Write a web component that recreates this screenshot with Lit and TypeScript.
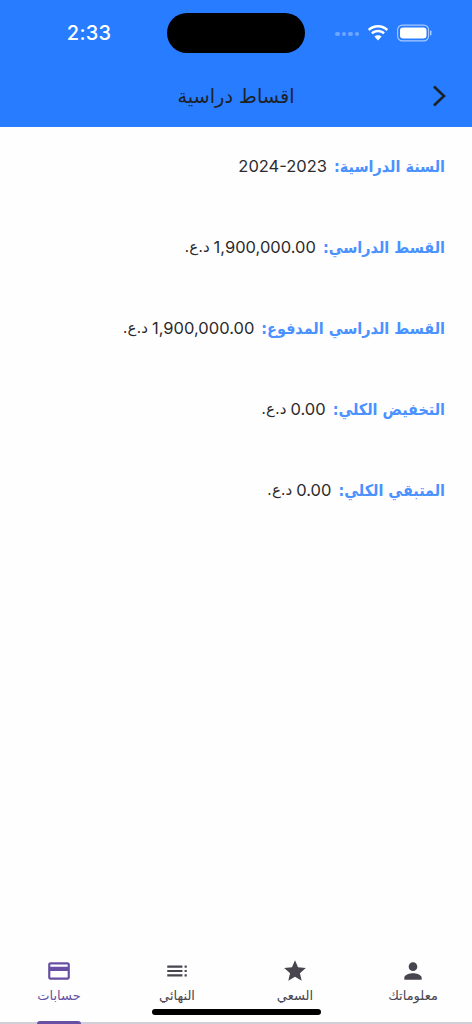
import { LitElement, html, css } from "lit";
import { customElement } from "lit/decorators.js";

const rows = [
  { label: "السنة الدراسية:", value: "2024-2023", unit: "" },
  { label: "القسط الدراسي:", value: "1,900,000.00", unit: "د.ع." },
  { label: "القسط الدراسي المدفوع:", value: "1,900,000.00", unit: "د.ع." },
  { label: "التخفيض الكلي:", value: "0.00", unit: "د.ع." },
  { label: "المتبقي الكلي:", value: "0.00", unit: "د.ع." },
];

@customElement("app-root")
export class AppRoot extends LitElement {
  static styles = css`
    :host { display: flex; flex-direction: column; width: 472px; height: 1024px; background: #fffeff; font-family: "DejaVu Sans", sans-serif; position: relative; overflow: hidden; }
    .head { background: #277cff; height: 127px; display: flex; flex-direction: column; flex: none; }
    .status { height: 53px; margin-top: 13px; display: grid; grid-template-columns: 167px 138px 167px; }
    .time { font: 500 20px "Inter", sans-serif; color: #fff; text-align: center; padding: 8px 0 0 11px; box-sizing: border-box; letter-spacing: 0.2px; }
    .island { background: #000; height: 40px; border-radius: 20px; }
    .sys-row { display: flex; align-items: center; gap: 8px; padding: 11px 0 0 30px; }
    .dots { display: flex; gap: 2px; margin-top: 2px; }
    .dots i { width: 4.500px; height: 4.500px; border-radius: 50%; background: #6fa6ff; }
    .bar { flex: 1; position: relative; display: flex; align-items: center; justify-content: center; margin-top: -1px; }
    .title { font-size: 19.300px; color: #1d2229; direction: rtl; }
    .chev { position: absolute; right: 23px; top: 50%; margin-top: -12px; width: 22px; height: 24px; }
    .list { flex: 1; display: flex; flex-direction: column; direction: rtl; padding: 24px 27px 0 0; gap: 51px; }
    .row { display: flex; align-items: center; gap: 7px; height: 30px; }
    .label { font-family: "DejaVu Sans Condensed", "DejaVu Sans", sans-serif; font-size: 16px; font-weight: 700; color: #4a92ff; white-space: nowrap; }
    .val { font: 400 16.500px "Inter", sans-serif; color: #2b2b2e; direction: ltr; }
    .unit { font-size: 15px; color: #2b2b2e; margin-right: -3px; }
    .tabs { height: 78px; flex: none; display: flex; direction: rtl; border-bottom: 2px solid #d2cfd8; box-sizing: border-box; position: relative; }
    .tab { width: 118px; display: flex; flex-direction: column; align-items: center; position: relative; padding-top: 12px; box-sizing: border-box; color: #48454e; font-size: 13px; }
    .tab svg { width: 26px; height: 26px; fill: currentColor; display: block; }
    .tab span { margin-top: 4px; }
    .tab.on { color: #6750a4; }
    .ind { position: absolute; left: 37px; width: 44px; bottom: -2px; height: 3px; border-radius: 3px 3px 0 0; background: #6750a4; }
    .home { position: absolute; left: 152px; bottom: 9px; width: 169px; height: 6px; background: #000; border-radius: 3px; }
  `;
  render() {
    return html`
      <div class="head">
        <div class="status">
          <div class="time">2:33</div>
          <div class="island"></div>
          <div>
            <div class="sys-row">
              <div class="dots"><i></i><i></i><i></i><i></i></div>
              <svg width="22" height="16" viewBox="0 0 22 16" fill="#fff"><path d="M11 2.500c3.300 0 6.300 1.300 8.500 3.400l1.600-1.800C18.400 1.500 14.900 0 11 0S3.600 1.500 .9 4.100l1.600 1.800C4.700 3.800 7.700 2.500 11 2.500zM11 7.300c2 0 3.800.8 5.200 2l1.700-1.800C16.100 5.800 13.700 4.800 11 4.800s-5.100 1-6.900 2.700l1.700 1.800c1.400-1.200 3.200-2 5.200-2zM11 10.200c-1.400 0-2.600.5-3.600 1.400L11 15.600l3.600-4C13.600 10.700 12.400 10.200 11 10.200z"/></svg>
              <svg width="35" height="18" viewBox="0 0 35 18"><rect x=".6" y="1.100" width="31" height="15.800" rx="4.800" fill="none" stroke="#a9c9ff" stroke-width="1.100"/><rect x="3" y="3.500" width="26.500" height="11" rx="3" fill="#fff"/><rect x="33" y="6.500" width="1.500" height="5" rx=".7" fill="#a9c9ff"/></svg>
            </div>
          </div>
        </div>
        <div class="bar">
          <div class="title">اقساط دراسية</div>
          <svg class="chev" viewBox="0 0 22 24" fill="none" stroke="#1d2229" stroke-width="2.600"><path d="M7 2.500 L17 12 L7 21.500"/></svg>
        </div>
      </div>
      <div class="list">
        ${rows.map(r => html`<div class="row"><span class="label">${r.label}</span><span class="val">${r.value}</span>${r.unit ? html`<span class="unit">${r.unit}</span>` : ""}</div>`)}
      </div>
      <div class="tabs">
        <div class="tab"><svg viewBox="0 0 24 24"><path d="M12 12c2.210 0 4-1.790 4-4s-1.790-4-4-4-4 1.790-4 4 1.790 4 4 4zm0 2c-2.670 0-8 1.340-8 4v2h16v-2c0-2.660-5.330-4-8-4z"/></svg><span>معلوماتك</span></div>
        <div class="tab"><svg viewBox="0 0 24 24"><path d="M12 17.270 18.180 21l-1.640-7.030L22 9.240l-7.190-.61L12 2 9.190 8.630 2 9.240l5.460 4.730L5.820 21z"/></svg><span>السعي</span></div>
        <div class="tab"><svg viewBox="0 0 24 24"><path d="M3 9h14V7H3v2zm0 4h14v-2H3v2zm0 4h14v-2H3v2zm16 0h2v-2h-2v2zm0-10v2h2V7h-2zm0 6h2v-2h-2v2z"/></svg><span>النهائي</span></div>
        <div class="tab on"><svg viewBox="0 0 24 24"><path d="M20 4H4c-1.110 0-1.990.89-1.990 2L2 18c0 1.110.89 2 2 2h16c1.110 0 2-.89 2-2V6c0-1.110-.89-2-2-2zm0 14H4v-6h16v6zm0-10H4V6h16v2z"/></svg><span>حسابات</span><div class="ind"></div></div>
      </div>
      <div class="home"></div>
    `;
  }
}
